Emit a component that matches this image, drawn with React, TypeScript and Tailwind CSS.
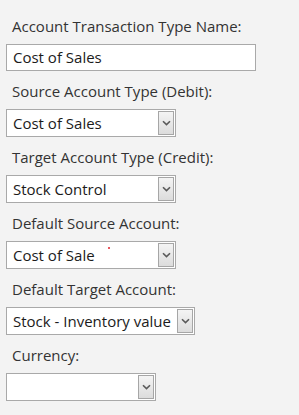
const fieldFont = { fontFamily: '"Open Sans", "Noto Sans", Arial, sans-serif' };

type SelectProps = {
  value: string;
  width: string;
  dot?: boolean;
};

const Chevron = () => (
  <svg width="9" height="6" viewBox="0 0 9 6" fill="none">
    <path d="M1 1.2 L4.5 4.6 L8 1.2" stroke="#5a5a5a" strokeWidth="1.6" />
  </svg>
);

const FakeSelect = ({ value, width, dot }: SelectProps) => (
  <div
    className={`relative flex h-[28px] items-stretch border border-[#a9a9a9] bg-white p-px ${width}`}>
    <div className="flex flex-1 items-center overflow-hidden whitespace-nowrap pl-[5px] text-[15px] text-[#1b1b1b]">
      {value}
    </div>
    {dot && (
      <span className="absolute top-[5px] left-[101px] h-[2px] w-[2px] rounded-full bg-[#e0202a]" />
    )}
    <div className="flex w-[16px] items-center justify-center border border-[#a6a6a6] bg-gradient-to-b from-[#f4f4f4] to-[#dcdcdc]">
      <Chevron />
    </div>
  </div>
);

const Label = ({ children }: { children: string }) => (
  <div className="mb-2 pl-[6px] text-[15px] leading-[20px] text-[#333333]">
    {children}
  </div>
);

export default function App() {
  return (
    <div
      className="min-h-[415px] w-[299px] bg-[#f3f3f3] pt-4 pl-[6px]"
      style={fieldFont}>
      <div className="mb-2.5">
        <Label>Account Transaction Type Name:</Label>
        <div className="flex h-[27px] w-[250px] items-center border border-[#a9a9a9] bg-white pl-[6px] text-[15px] text-[#1b1b1b]">
          Cost of Sales
        </div>
      </div>
      <div className="mb-2.5">
        <Label>Source Account Type (Debit):</Label>
        <FakeSelect value="Cost of Sales" width="w-[170px]" />
      </div>
      <div className="mb-2.5">
        <Label>Target Account Type (Credit):</Label>
        <FakeSelect value="Stock Control" width="w-[170px]" />
      </div>
      <div className="mb-2.5">
        <Label>Default Source Account:</Label>
        <FakeSelect value="Cost of Sale" width="w-[170px]" dot />
      </div>
      <div className="mb-2.5">
        <Label>Default Target Account:</Label>
        <FakeSelect value="Stock - Inventory value" width="w-[189px]" />
      </div>
      <div className="mb-2.5">
        <Label>Currency:</Label>
        <FakeSelect value="" width="w-[150px]" />
      </div>
    </div>
  );
}
